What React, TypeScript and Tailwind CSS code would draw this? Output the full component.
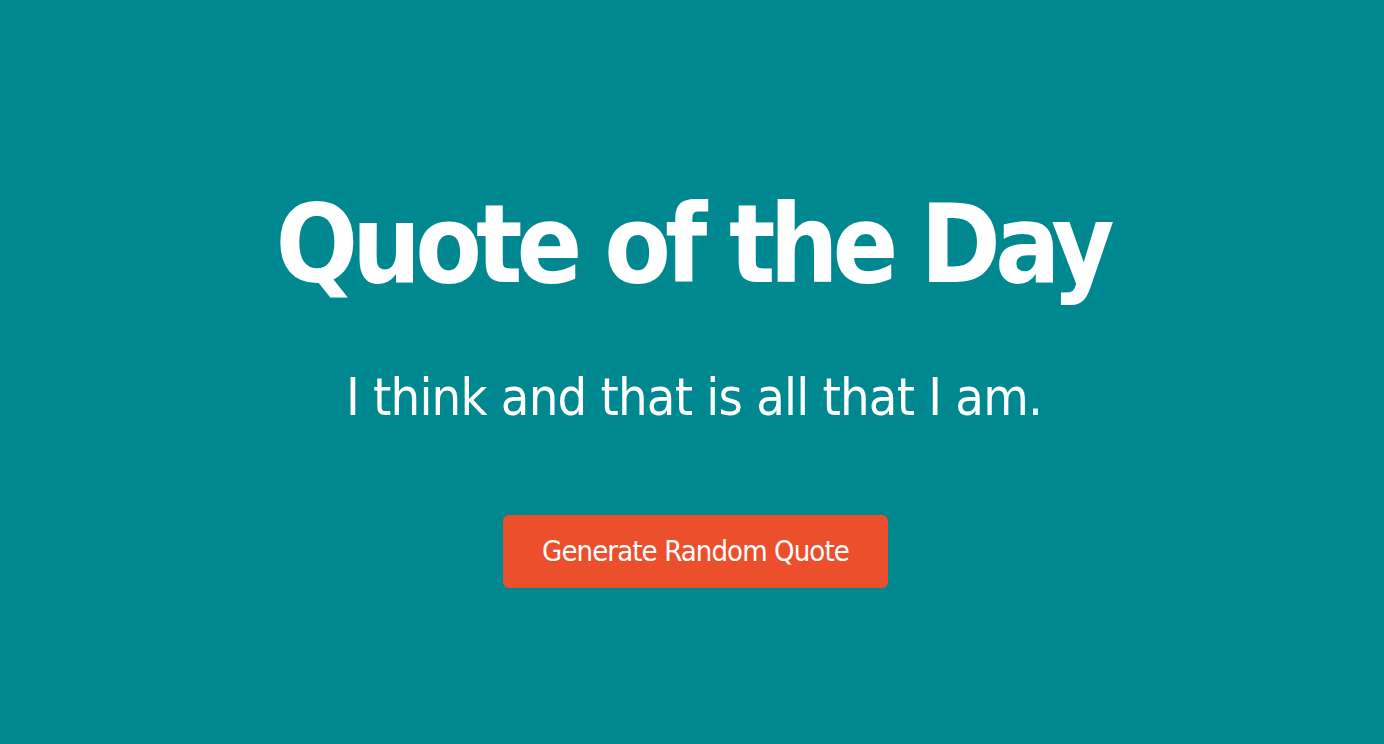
export default function App() {
  return (
    <div className="min-h-screen w-full bg-[#008891] flex flex-col items-center pt-[178px] text-white font-['DejaVu_Sans_Condensed','DejaVu_Sans',Tahoma,sans-serif]">
      <h1 className="text-[108px] font-bold leading-[134px] tracking-[-6px]">Quote of the Day</h1>
      <p className="mt-[55px] ml-[4px] text-[52px] leading-[60px] tracking-[-0.8px]">I think and that is all that I am.</p>
      <button className="mt-[88px] ml-[7px] w-[385px] h-[73px] rounded-[6px] bg-[#ec4f2b] text-[29px] tracking-[-0.9px] text-white">
        Generate Random Quote
      </button>
    </div>
  );
}
